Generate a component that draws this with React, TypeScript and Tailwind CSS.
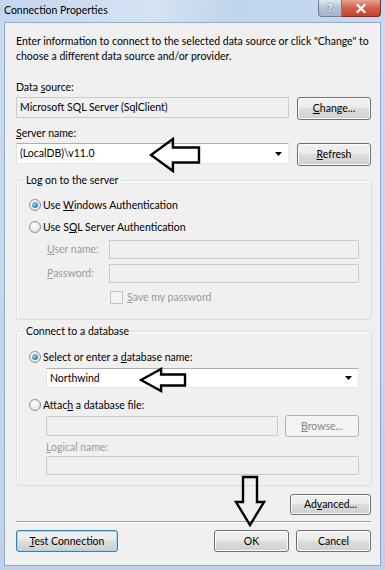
import React from 'react';

const font = { fontFamily: 'Lato, "Noto Sans", sans-serif' };

function Btn({ children, className = '', focus = false, disabled = false }: { children: React.ReactNode; className?: string; focus?: boolean; disabled?: boolean }) {
  return (
    <div
      className={
        'flex items-center justify-center whitespace-nowrap rounded-[3px] border text-[10.5px] ' +
        (disabled
          ? 'border-[#adb2b5] bg-[#f4f4f4] text-[#838383] '
          : focus
          ? 'border-[#3c7fb1] bg-[linear-gradient(#f2f2f2_0%,#ebebeb_45%,#dddddd_50%,#cfcfcf_100%)] text-black shadow-[inset_0_0_0_1px_#9cd5f5] '
          : 'border-[#707070] bg-[linear-gradient(#f2f2f2_0%,#ebebeb_45%,#dddddd_50%,#cfcfcf_100%)] text-black shadow-[inset_0_0_0_1px_#fcfcfc] ') +
        className
      }
    >
      {children}
    </div>
  );
}

function Input({ children, className = '', disabled = false, combo = false }: { children?: React.ReactNode; className?: string; disabled?: boolean; combo?: boolean }) {
  return (
    <div
      className={
        'flex items-center border pl-[3px] pr-[6px] text-[10.5px] ' +
        (disabled
          ? 'border-[#c9cccf] bg-[#f0f0f0] '
          : 'border-[#abadb3] border-r-[#e3e9ef] border-b-[#e3e9ef] border-l-[#e2e3ea] bg-white ') +
        className
      }
    >
      <span className="flex-1 truncate">{children}</span>
      {combo && (
        <svg width="7" height="4" viewBox="0 0 7 4">
          <path d="M0 0h7L3.5 4z" fill="#000" />
        </svg>
      )}
    </div>
  );
}

function Radio({ checked = false, children }: { checked?: boolean; children: React.ReactNode }) {
  return (
    <div className="flex h-[16px] items-center gap-[2px] whitespace-nowrap leading-[16px]">
      <span className="flex h-[12px] w-[12px] items-center justify-center rounded-full border border-[#8e8f8f] bg-[radial-gradient(circle_at_40%_35%,#ffffff,#d9d9d9)]">
        {checked && <span className="h-[6px] w-[6px] rounded-full bg-[radial-gradient(circle_at_35%_35%,#8ad2f7,#1a5e9e)]" />}
      </span>
      <span>{children}</span>
    </div>
  );
}

function ArrowLeft({ className, w, h }: { className: string; w: number; h: number }) {
  return (
    <svg className={className} width={w} height={h} viewBox={`0 0 ${w} ${h}`}>
      <path
        d={`M2 ${h / 2} L${w * 0.46} 2 L${w * 0.46} ${h * 0.29} L${w - 2} ${h * 0.29} L${w - 2} ${h * 0.71} L${w * 0.46} ${h * 0.71} L${w * 0.46} ${h - 2} Z`}
        fill="none"
        stroke="#000"
        strokeWidth="2.4"
      />
    </svg>
  );
}

export default function App() {
  return (
    <div className="h-[570px] w-[385px] overflow-hidden bg-[linear-gradient(#c9dcf1,#bed2ea)] text-[10.5px] text-black" style={font}>
      {/* title bar */}
      <div className="relative flex h-[22px] items-start justify-between bg-[linear-gradient(100deg,#c3d6ee_0%,#d5e3f3_40%,#c0d4ec_60%,#c6d9ef_100%)]">
        <span className="pl-[4px] pt-[2px] leading-[16px]">Connection Properties</span>
        <div className="mr-[4px] flex">
          <div className="flex h-[17px] w-[24px] items-center justify-center rounded-bl-[4px] border border-t-0 border-[#6d7d92] bg-[linear-gradient(#dfe8f3,#b2c2d6_50%,#a3b5cb)] text-[12px] font-bold leading-none text-white [text-shadow:0_0_2px_#2b3a4e]">
            ?
          </div>
          <div className="flex h-[17px] w-[39px] items-center justify-center rounded-br-[4px] border border-l-0 border-t-0 border-[#7d2b2b] bg-[linear-gradient(#e8a493,#d1614b_50%,#c3422d)] text-white">
            <svg width="10" height="9" viewBox="0 0 10 9">
              <path d="M1.5 1 L8.5 8 M8.5 1 L1.5 8" stroke="#ffffff" strokeWidth="2.2" strokeLinecap="square" />
            </svg>
          </div>
        </div>
      </div>

      {/* client area */}
      <div className="relative mx-[4px] h-[544px] border border-[#94a8c2] bg-[#f0f0f0] pl-[11px] pr-[9px] pt-[11px] leading-[15px]">
        <p className="whitespace-nowrap">
          Enter information to connect to the selected data source or click "Change" to
          <br />
          choose a different data source and/or provider.
        </p>

        <div className="mt-[16px]">
          Data <u>s</u>ource:
        </div>
        <div className="mt-[2px] flex items-start justify-between">
          <Input disabled className="h-[21px] w-[273px]">
            Microsoft SQL Server (SqlClient)
          </Input>
          <Btn className="h-[23px] w-[74px]">
            <span>
              <u>C</u>hange...
            </span>
          </Btn>
        </div>

        <div className="mt-[6px]">
          <u>S</u>erver name:
        </div>
        <div className="mt-[2px] flex items-start justify-between">
          <Input combo className="h-[21px] w-[273px]">
            (LocalDB)\v11.0
          </Input>
          <Btn className="h-[23px] w-[74px]">
            <span>
              <u>R</u>efresh
            </span>
          </Btn>
        </div>

        <fieldset className="mt-[7px] mr-[-1px] rounded-[3px] border border-[#d5dfe5] px-[12px] pb-[15px] pt-[9px] shadow-[inset_1px_1px_0_#ffffff]">
          <legend className="ml-[-5px] px-[2px] leading-[15px]">Log on to the server</legend>
          <Radio checked>
            Use <u>W</u>indows Authentication
          </Radio>
          <div className="mt-[6px]">
            <Radio>
              Use S<u>Q</u>L Server Authentication
            </Radio>
          </div>
          <div className="mt-[5px] flex items-center whitespace-nowrap pl-[18px] text-[#9a9a9a]">
            <span className="w-[62px] shrink-0">
              <u>U</u>ser name:
            </span>
            <Input disabled className="h-[19px] flex-1" />
          </div>
          <div className="mt-[5px] flex items-center whitespace-nowrap pl-[18px] text-[#9a9a9a]">
            <span className="w-[62px] shrink-0">
              <u>P</u>assword:
            </span>
            <Input disabled className="h-[19px] flex-1" />
          </div>
          <div className="mt-[7px] flex h-[14px] items-center gap-[4px] whitespace-nowrap pl-[81px] text-[#9a9a9a]">
            <span className="h-[13px] w-[13px] border border-[#c2c2c2] bg-[#f4f4f4]" />
            <span>
              <u>S</u>ave my password
            </span>
          </div>
        </fieldset>

        <fieldset className="mt-[4px] mr-[-1px] rounded-[3px] border border-[#d5dfe5] px-[12px] pb-[10px] pt-[10px] shadow-[inset_1px_1px_0_#ffffff]">
          <legend className="ml-[-5px] px-[2px] leading-[15px]">Connect to a database</legend>
          <Radio checked>
            Select or enter a <u>d</u>atabase name:
          </Radio>
          <div className="mt-[3px] pl-[17px]">
            <Input combo className="h-[20px] w-full">
              Northwind
            </Input>
          </div>
          <div className="mt-[9px]">
            <Radio>
              Attac<u>h</u> a database file:
            </Radio>
          </div>
          <div className="mt-[2px] flex items-center justify-between pl-[17px]">
            <Input disabled className="h-[20px] w-[232px]" />
            <Btn disabled className="h-[22px] w-[74px]">
              <span>
                <u>B</u>rowse...
              </span>
            </Btn>
          </div>
          <div className="mt-[3px] pl-[17px] text-[#9a9a9a]">
            <u>L</u>ogical name:
          </div>
          <div className="mt-[1px] pl-[17px]">
            <Input disabled className="h-[19px] w-full" />
          </div>
        </fieldset>

        <div className="mt-[8px] flex justify-end">
          <Btn className="h-[21px] w-[81px]">
            <span>
              Ad<u>v</u>anced...
            </span>
          </Btn>
        </div>

        <div className="mt-[6px] border-t border-[#a0a0a0] shadow-[0_1px_0_#ffffff]" />

        <div className="mt-[8px] flex items-center">
          <Btn focus className="h-[22px] w-[102px]">
            <span>
              <u>T</u>est Connection
            </span>
          </Btn>
          <div className="flex-1" />
          <Btn className="h-[22px] w-[75px]">OK</Btn>
          <Btn className="ml-[7px] h-[22px] w-[75px]">Cancel</Btn>
        </div>

        {/* annotation arrows */}
        <ArrowLeft className="absolute left-[144px] top-[114px]" w={52} h={36} />
        <ArrowLeft className="absolute left-[134px] top-[344px]" w={48} h={26} />
        <svg className="absolute left-[229px] top-[452px]" width="32" height="52" viewBox="0 0 32 52">
          <path d="M9 2 L23 2 L23 27 L30 27 L16 50 L2 27 L9 27 Z" fill="none" stroke="#000" strokeWidth="2.4" />
        </svg>
      </div>
    </div>
  );
}
